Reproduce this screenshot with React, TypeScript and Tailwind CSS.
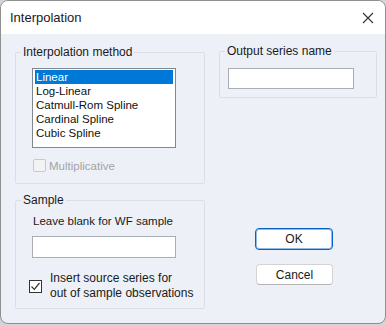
import React from "react";

export default function App() {
  const items = ["Linear", "Log-Linear", "Catmull-Rom Spline", "Cardinal Spline", "Cubic Spline"];
  return (
    <div className="w-[386px] h-[325px] bg-[#d4d4d4] font-['Liberation_Sans',Arial,sans-serif] text-[#1a1a1a]">
      <div className="w-[386px] h-[324px] rounded-[8px] border border-[#8f8f8f] bg-[#edf1f7] overflow-hidden flex flex-col">
        {/* Title bar */}
        <div className="h-[33px] shrink-0 bg-white flex items-center justify-between pl-[9px] pr-[10px]">
          <span className="text-[13px] leading-[16px]">Interpolation</span>
          <svg width="12" height="12" viewBox="0 0 12 12" className="mr-[1px]">
            <path d="M1 1 L11 11 M11 1 L1 11" stroke="#333" strokeWidth="1.1" fill="none" />
          </svg>
        </div>
        {/* Body */}
        <div className="flex pt-[11px] pl-[14px]">
          {/* Left column */}
          <div className="w-[190px] flex flex-col gap-[9px]">
            <fieldset className="h-[139px] border border-[#d9dfe8] rounded-[2px]">
              <legend className="ml-[5px] px-[2px] text-[12px] leading-[14px]">Interpolation method</legend>
              <div className="pt-[9px] pl-[16px]">
                <div className="w-[144px] h-[80px] border border-[#828790] bg-white pt-[1px] px-[2px]">
                  {items.map((it, i) => (
                    <div
                      key={it}
                      className={
                        i === 0
                          ? "h-[14px] pl-[1px] text-[11.5px] leading-[14px] bg-[#0078d7] text-white"
                          : "h-[14px] pl-[1px] text-[11.5px] leading-[15px] text-[#111]"
                      }
                    >
                      {it}
                    </div>
                  ))}
                </div>
                <div className="mt-[11px] h-[13px] flex items-center">
                  <div className="ml-[1px] w-[13px] h-[13px] border border-[#c9c9c9] bg-[#f3f3f3] rounded-[2px]" />
                  <span className="ml-[3px] text-[11.5px] leading-[14px] text-[#a3a3a3]">Multiplicative</span>
                </div>
              </div>
            </fieldset>
            <fieldset className="h-[116px] border border-[#d9dfe8] rounded-[2px]">
              <legend className="ml-[5px] px-[2px] text-[12px] leading-[14px]">Sample</legend>
              <div className="pt-[7px] pl-[17px]">
                <div className="text-[11.5px] leading-[14px]">Leave blank for WF sample</div>
                <div className="mt-[8px] ml-[-1px] w-[144px] h-[22px] border border-[#a9adb4] bg-white" />
                <div className="mt-[13px] ml-[-4px] flex items-center">
                  <div className="w-[13px] h-[13px] border border-[#333] bg-white flex items-center justify-center shrink-0">
                    <svg width="11" height="11" viewBox="0 0 11 11">
                      <path d="M1.5 5.5 L4.3 8.3 L9.5 2" stroke="#333" strokeWidth="1.2" fill="none" />
                    </svg>
                  </div>
                  <div className="ml-[8px] text-[12px] leading-[15px]">
                    <div>Insert source series for</div>
                    <div>out of sample observations</div>
                  </div>
                </div>
              </div>
            </fieldset>
          </div>
          {/* Right column */}
          <div className="ml-[14px] w-[158px] flex flex-col">
            <fieldset className="mt-[-1px] h-[54px] border border-[#d9dfe8] rounded-[2px]">
              <legend className="ml-[5px] px-[2px] text-[12px] leading-[14px]">Output series name</legend>
              <div className="pt-[10px] pl-[8px]">
                <div className="w-[126px] h-[21px] border border-[#a9adb4] bg-white" />
              </div>
            </fieldset>
            <button className="mt-[130px] ml-[36px] w-[78px] h-[22px] rounded-[4px] border border-[#0a63c2] shadow-[inset_0_0_0_1px_rgba(10,99,194,0.45)] bg-white text-[12px] leading-[14px] text-[#1a1a1a]">
              OK
            </button>
            <button className="mt-[14px] ml-[37px] w-[77px] h-[21px] rounded-[4px] border border-[#d3d3d3] border-b-[#b5b5b5] bg-white text-[12px] leading-[14px] text-[#1a1a1a]">
              Cancel
            </button>
          </div>
        </div>
      </div>
    </div>
  );
}
